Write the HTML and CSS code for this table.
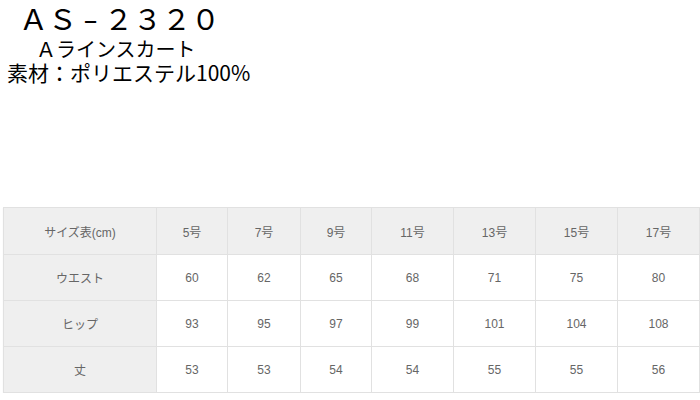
FILE: index.html
```html
<!DOCTYPE html>
<html lang="ja">
<head>
<meta charset="utf-8">
<link rel="stylesheet" href="styles.css">
</head>
<body>
<div class="intro">
  <div class="model">ＡＳ<span class="dash">-</span>２３２０</div>
  <div class="name">Ａラインスカート</div>
  <div class="material">素材：ポリエステル100%</div>
</div>
<table class="size-table">
  <colgroup>
    <col class="col-label">
    <col class="col-a"><col class="col-b"><col class="col-a">
    <col class="col-c"><col class="col-c"><col class="col-c"><col class="col-c">
  </colgroup>
  <tr class="head">
    <th>サイズ表(cm)</th><th>5号</th><th>7号</th><th>9号</th><th>11号</th><th>13号</th><th>15号</th><th>17号</th>
  </tr>
  <tr>
    <th>ウエスト</th><td>60</td><td>62</td><td>65</td><td>68</td><td>71</td><td>75</td><td>80</td>
  </tr>
  <tr>
    <th>ヒップ</th><td>93</td><td>95</td><td>97</td><td>99</td><td>101</td><td>104</td><td>108</td>
  </tr>
  <tr>
    <th>丈</th><td>53</td><td>53</td><td>54</td><td>54</td><td>55</td><td>55</td><td>56</td>
  </tr>
</table>
</body>
</html>
```

FILE: styles.css
```css
html, body {
  margin: 0;
  padding: 0;
  background: #fff;
}
body {
  font-family: "Noto Sans CJK JP", sans-serif;
  color: #000;
}
.intro {
  padding: 3px 0 0 0;
  height: 207px;
  box-sizing: border-box;
}
.model {
  font-size: 29px;
  line-height: 29px;
  padding-left: 19px;
}
.dash {
  display: inline-block;
  width: 27px;
  text-align: center;
  transform: scaleX(1.5);
}
.name {
  font-size: 20px;
  line-height: 22px;
  padding-left: 36px;
  margin-top: 6px;
}
.material {
  font-size: 21px;
  line-height: 24px;
  padding-left: 7px;
}
.size-table {
  margin-left: 3px;
  border-collapse: collapse;
  table-layout: fixed;
  width: 696px;
  font-family: "Liberation Sans", Arial, "Noto Sans CJK JP", sans-serif;
  font-size: 12px;
  color: #666;
  box-shadow: 0 1px 1px #ececec;
}
.col-label { width: 153px; }
.col-a { width: 71px; }
.col-b { width: 73px; }
.col-c { width: 82px; }
.size-table th,
.size-table td {
  border: 1px solid #e1e1e1;
  height: 45px;
  padding: 0;
  text-align: center;
  vertical-align: middle;
  font-weight: normal;
}
.size-table th {
  background: #efefef;
}
.size-table .head th {
  height: 46px;
}
```
